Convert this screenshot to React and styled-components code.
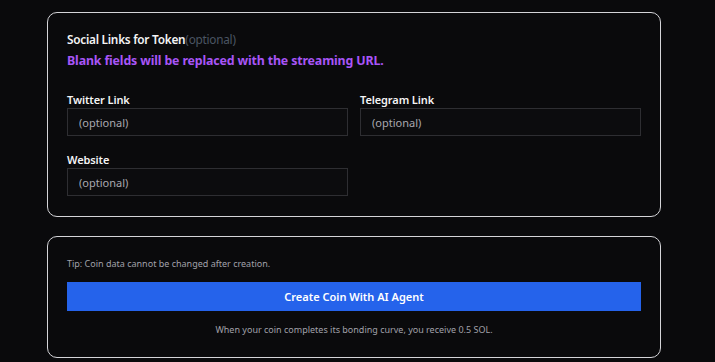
import React from 'react';
import styled, { createGlobalStyle } from 'styled-components';

const GlobalStyle = createGlobalStyle`
  html, body {
    margin: 0;
    background: #0a0a0c;
  }
  body {
    font-family: "Noto Sans", "Open Sans", sans-serif;
  }
`

const Page = styled.div`
  display: flex;
  flex-direction: column;
  gap: 19px;
  width: 614px;
  padding: 12px 0 0 47px;
`

const Card = styled.div`
  border: 1px solid #d4d4d8;
  border-radius: 10px;
  background: #0a0a0c;
  padding: ${props => props.pad || '20px'};
  display: flex;
  flex-direction: column;
`

const Title = styled.div`
  font-size: 11.8px;
  font-weight: 600;
  color: #f4f4f5;
  letter-spacing: -0.25px;
  line-height: 16px;
`

const Optional = styled.span`
  font-weight: 400;
  color: #4b5563;
`

const Notice = styled.div`
  font-size: 12.4px;
  font-weight: 700;
  color: #a855f7;
  margin-top: 6px;
  line-height: 16px;
  letter-spacing: -0.15px;
`

const Grid = styled.div`
  display: grid;
  grid-template-columns: 1fr 1fr;
  column-gap: 12px;
  row-gap: 17px;
  margin-top: 24px;
`

const Field = styled.div`
  display: flex;
  flex-direction: column;
  gap: 1px;
`

const Label = styled.label`
  font-size: 11px;
  font-weight: 600;
  color: #f4f4f5;
  line-height: 14px;
  letter-spacing: -0.1px;
`

const Input = styled.input`
  box-sizing: border-box;
  height: 28px;
  width: 100%;
  background: #0c0c0e;
  border: 1px solid #2e2e32;
  color: #e4e4e7;
  padding: 0 11px;
  font-family: inherit;
  font-size: 11px;
  outline: none;
  &::placeholder {
    color: #a8a8b0;
  }
`

const Tip = styled.div`
  font-size: 9px;
  color: #a1a1aa;
  line-height: 12px;
`

const Button = styled.button`
  margin-top: 12px;
  height: 29px;
  width: 100%;
  border: none;
  background: #2563eb;
  color: #ffffff;
  font-family: inherit;
  font-size: 11px;
  font-weight: 600;
  cursor: pointer;
`

const Footnote = styled.div`
  margin-top: 13px;
  text-align: center;
  font-size: 9px;
  color: #a1a1aa;
  line-height: 12px;
`

const fields = [
  { name: 'Twitter Link' },
  { name: 'Telegram Link' },
  { name: 'Website' },
]

export default function App() {
  return (
    <>
      <GlobalStyle />
      <Page>
        <Card pad="18px 19px 20px">
          <Title>Social Links for Token<Optional>(optional)</Optional></Title>
          <Notice>Blank fields will be replaced with the streaming URL.</Notice>
          <Grid>
            {fields.map(f => (
              <Field key={f.name}>
                <Label>{f.name}</Label>
                <Input placeholder="(optional)" />
              </Field>
            ))}
          </Grid>
        </Card>
        <Card pad="21px 19px 21px">
          <Tip>Tip: Coin data cannot be changed after creation.</Tip>
          <Button>Create Coin With AI Agent</Button>
          <Footnote>When your coin completes its bonding curve, you receive 0.5 SOL.</Footnote>
        </Card>
      </Page>
    </>
  );
}
